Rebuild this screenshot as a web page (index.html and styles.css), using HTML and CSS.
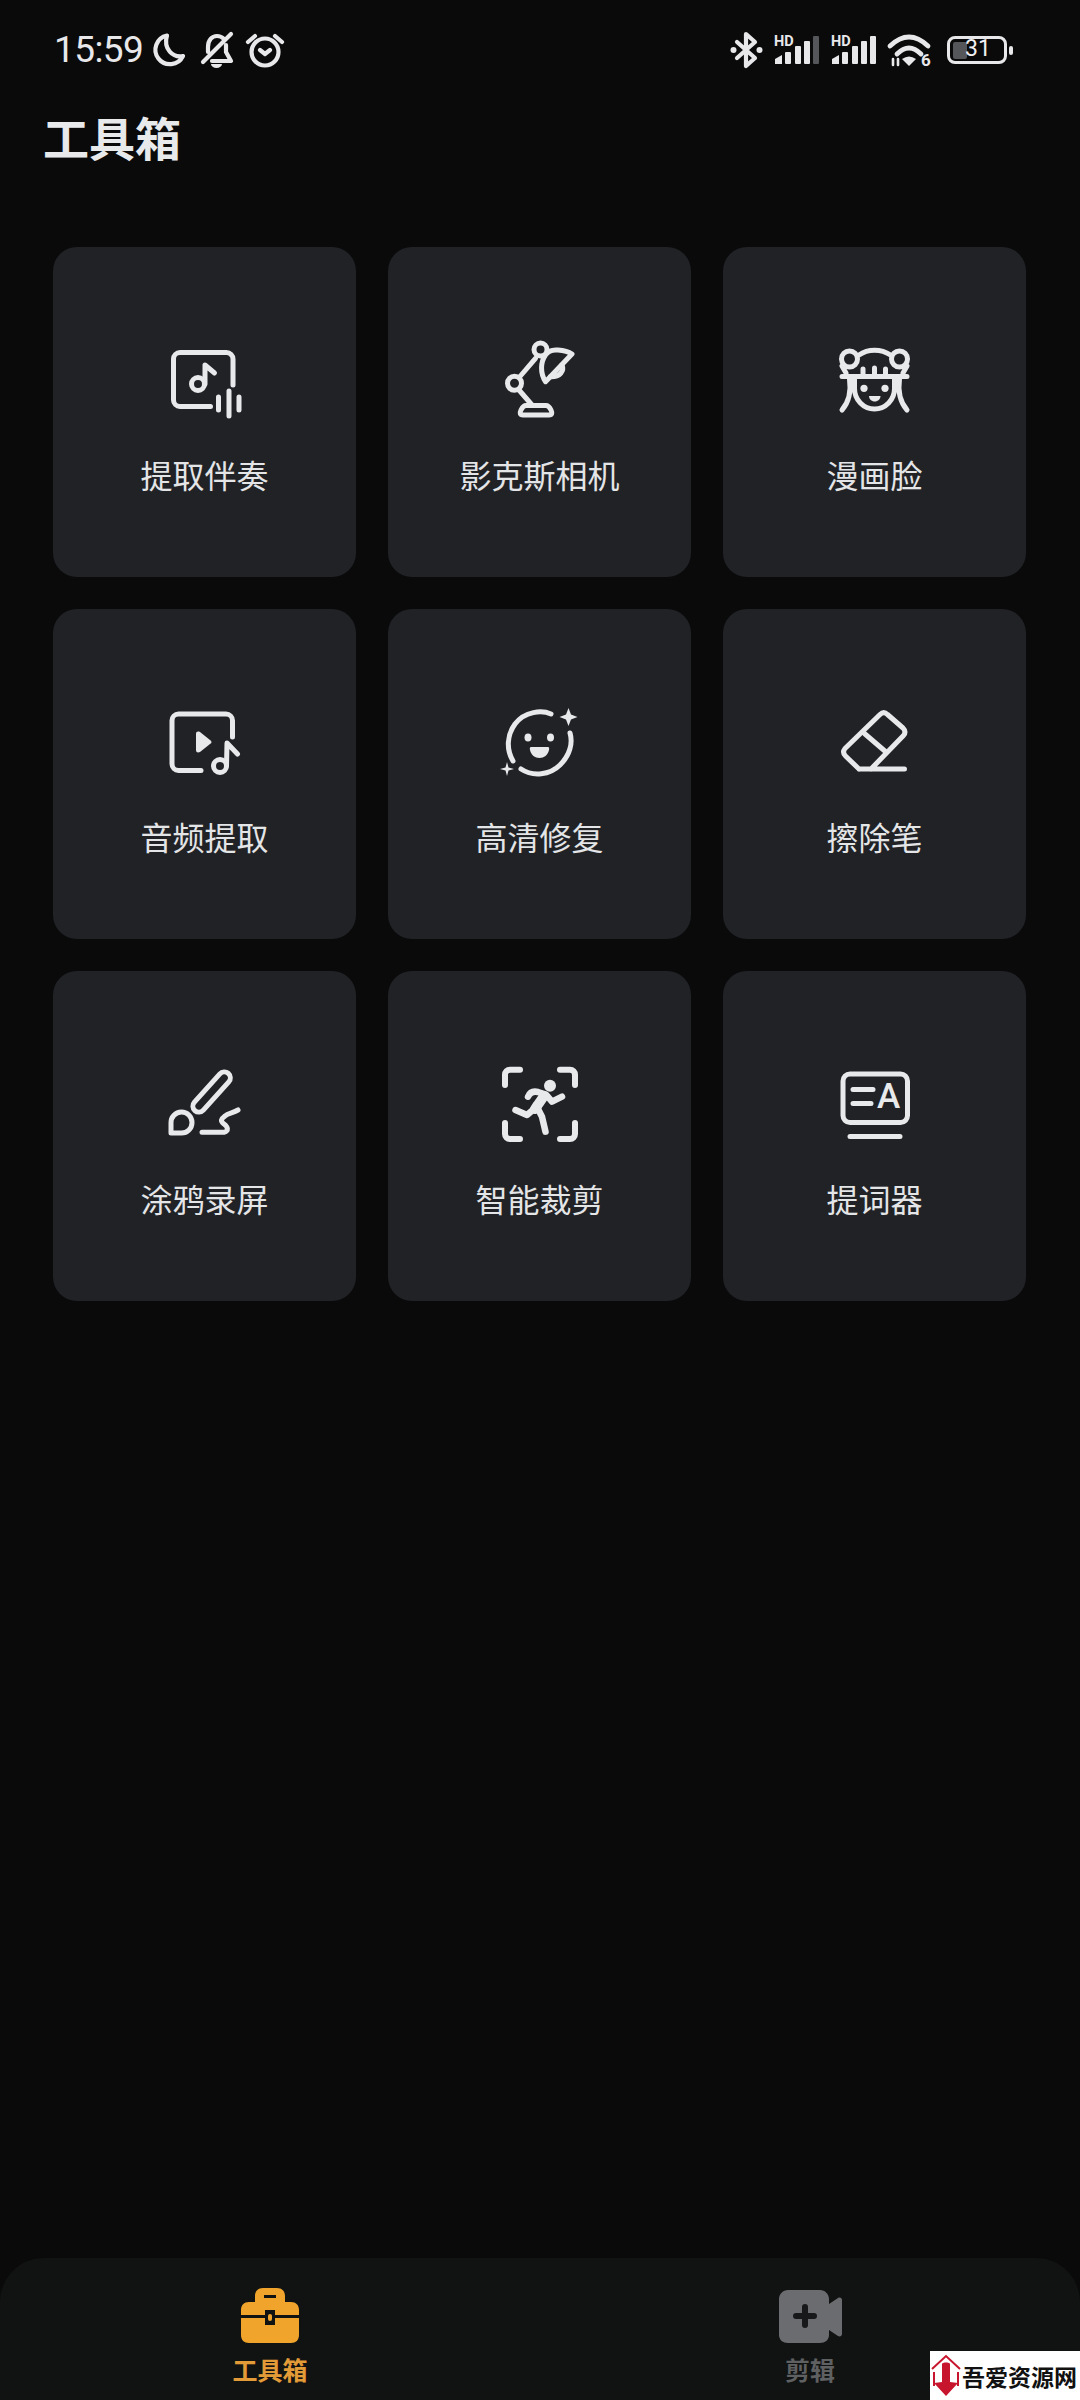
FILE: index.html
```html
<!DOCTYPE html>
<html lang="zh-CN">
<head>
<meta charset="utf-8">
<title>工具箱</title>
<link rel="stylesheet" href="styles.css">
</head>
<body>
<div class="page">
  <header class="status">
    <div class="status-left">
      <span class="time">15:59</span>
      <svg class="si moon" width="32" height="34" viewBox="0 0 32 34"><path d="M14 2.500A14.500 14.500 0 1 0 30 23C20 25 10 16 14 2.500Z"/></svg>
      <svg class="si bell" width="33" height="36" viewBox="0 0 33 36"><path d="M3 30 31 2M8 20V15C8 8 12 4 17 4c3 0 5 1 7 3M26 13V20l5 9H12"/><path class="solid" d="M11 32h11a5.500 4 0 0 1-11 0Z"/></svg>
      <svg class="si alarm" width="38" height="35" viewBox="0 0 38 35"><circle cx="19" cy="19" r="13.500"/><path d="M2 9 9 3M36 9 29 3M14 17l5 4 5-4"/></svg>
    </div>
    <div class="status-right">
      <svg class="si bt" width="33" height="36" viewBox="0 0 33 36"><path d="M7 10 25 26 16 34V2L25 10 7 26"/><circle class="solid" cx="3.500" cy="18" r="3"/><circle class="solid" cx="29.500" cy="18" r="3"/></svg>
      <svg class="sig" width="46" height="30" viewBox="0 0 46 30"><text class="hd" x="0" y="11">HD</text><path class="bar" d="M1 29V24L8 20V29Z"/><rect class="bar" x="11" y="17" width="6" height="12" rx="1"/><rect class="bar" x="21" y="11" width="6" height="18" rx="1"/><rect class="bar" x="30" y="6" width="6" height="23" rx="1"/><rect class="bar dim" x="39" y="1" width="6" height="28" rx="1"/></svg>
      <svg class="sig" width="46" height="30" viewBox="0 0 46 30"><text class="hd" x="0" y="11">HD</text><path class="bar" d="M1 29V24L8 20V29Z"/><rect class="bar" x="11" y="17" width="6" height="12" rx="1"/><rect class="bar" x="21" y="11" width="6" height="18" rx="1"/><rect class="bar" x="30" y="6" width="6" height="23" rx="1"/><rect class="bar" x="39" y="1" width="6" height="28" rx="1"/></svg>
      <svg class="si wifi" width="45" height="34" viewBox="0 0 45 34"><path d="M2 13Q21-5 40 13M9 21Q21 9 33 21"/><path class="solid" d="M14 26Q21 21 28 26L21 33Z"/><path class="thin" d="M5 26v6M10 26v6"/><text class="six" x="33" y="33">6</text></svg>
      <div class="battery">
        <div class="battery-body"><span class="battery-fill"></span><span class="battery-num">31</span></div>
        <span class="battery-tip"></span>
      </div>
    </div>
  </header>

  <h1 class="title">工具箱</h1>

  <main class="grid">
    <a class="card">
      <svg class="icon" width="80" height="80" viewBox="0 0 80 80"><path d="M68 40V14a6.500 6.500 0 0 0-6.500-6.500H15A6.500 6.500 0 0 0 8.500 14V55A6.500 6.500 0 0 0 15 61.500H45.500"/><circle cx="33" cy="39" r="6.500"/><path d="M40 39V20L49.500 28M53.500 52V65M64 46V71M74 52V65"/></svg>
      <span class="label">提取伴奏</span>
    </a>
    <a class="card">
      <svg class="icon" width="80" height="80" viewBox="0 0 80 80"><circle cx="40.500" cy="4.500" r="6.500"/><circle cx="14.500" cy="38.300" r="7"/><path d="M20 31.500 35.500 13.300M19 45 32 60M45.500 10C48 6 53 4.500 58 5 64 5.500 69 7 72 9L45.500 36.700C40 28 40.500 17 45.500 10Z"/><path d="M62 20C64.500 26 60 32 50.500 31.700"/><path d="M26 60.500H46C48.500 60.500 49.500 62 51 65 52.500 68 52 70 49 70H23C20 70 19.500 68 21 65 22.500 62 23.500 60.500 26 60.500Z"/></svg>
      <span class="label">影克斯相机</span>
    </a>
    <a class="card">
      <svg class="icon" width="80" height="80" viewBox="0 0 80 80"><circle cx="14.500" cy="14" r="8"/><circle cx="64.500" cy="14" r="8"/><path d="M24 10C33 3.500 46 3.500 55.500 10M7 21 11 28M72 21 68 28M7 31.500H72M28 24V29M39.500 23V29M50.500 24V29M14.500 34C16 45 14 57 7 65M64.500 34C63 45 65 57 72 65M19.500 33V43.500A20 20.500 0 0 0 59.500 43.500V33"/><circle class="solid" cx="29" cy="43.300" r="3.600"/><circle class="solid" cx="50" cy="43.300" r="3.600"/><path class="solid" d="M34 51H45.500C45.500 54 43 56.500 39.700 56.500S34 54 34 51Z"/></svg>
      <span class="label">漫画脸</span>
    </a>
    <a class="card">
      <svg class="icon" width="80" height="80" viewBox="0 0 80 80"><path d="M67.500 30V13.500A6.500 6.500 0 0 0 61 7H13.500A6.500 6.500 0 0 0 7 13.500V57A6.500 6.500 0 0 0 13.500 63.500H36"/><path class="solid" d="M31 27C31 24.500 33 24 35 25L45 33C47 34.500 47 36 45 37L35 45C33 46 31 45.500 31 43Z"/><circle cx="55" cy="59" r="6.500"/><path d="M61.500 59 62 36 72.500 47"/></svg>
      <span class="label">音频提取</span>
    </a>
    <a class="card">
      <svg class="icon" width="80" height="80" viewBox="0 0 80 80"><path d="M51 7C42 3 25 4 15 17 7 28 6 42 13 54M21 62C33 70 50 68 60 58 70 48 73 36 70 26"/><path class="solid" d="M68.500 1 71 7.500 77.500 10 71 12.500 68.500 19 66 12.500 59.500 10 66 7.500ZM7 55 8.500 60.500 14 62 8.500 63.500 7 69 5.500 63.500 0 62 5.500 60.500Z"/><ellipse class="solid" cx="28" cy="30.500" rx="3.500" ry="4"/><ellipse class="solid" cx="50.500" cy="30.500" rx="3.500" ry="4"/><path class="solid" d="M31 40H48C49 40 49.500 41 49 43 48 48 44 51 39.500 51S31 48 30 43C29.500 41 30 40 31 40Z"/></svg>
      <span class="label">高清修复</span>
    </a>
    <a class="card">
      <svg class="icon" width="80" height="80" viewBox="0 0 80 80"><path d="M24 62 10.500 49C8 46.500 8 44 10 41.500L45 7.500C47.500 5 50 5 52.500 7.500L68 21C70.500 23.500 70.500 26 68.500 28.500L36 62M24 62H69.500M30 27 51 45"/></svg>
      <span class="label">擦除笔</span>
    </a>
    <a class="card">
      <svg class="icon" width="80" height="80" viewBox="0 0 80 80"><rect x="40.600" y="-2" width="12" height="50" rx="6" transform="rotate(42 46.600 23)"/><path d="M6 64V53.700A10.500 10.500 0 1 1 16.500 64ZM73 41C68 44 63 44 60 47 56 50 55 52 59 55 63 58 64 62 59 63.300H37"/></svg>
      <span class="label">涂鸦录屏</span>
    </a>
    <a class="card">
      <svg class="icon" width="80" height="80" viewBox="0 0 80 80"><g class="corners"><path d="M20 .7H10A5 5 0 0 0 5 5.700V16M60 .7H70A5 5 0 0 1 75 5.700V16M5 54V65A5 5 0 0 0 10 70H20M75 54V65A5 5 0 0 1 70 70H60"/></g><circle class="solid" cx="50" cy="16.700" r="6"/><path class="fat" d="M28 27.700C30 23 34 22 38 23L46 25.500 52 32.700 62 27.700M15.500 41 27 46 34 40M36 36 42 47.700 45.500 62.700"/><path class="torso" d="M44 27 35 40"/></svg>
      <span class="label">智能裁剪</span>
    </a>
    <a class="card">
      <svg class="icon" width="80" height="80" viewBox="0 0 80 80"><rect x="8" y="5" width="64.500" height="48.500" rx="7"/><path d="M18 20.500H38M18 34.500H36M15 67.500H65"/><text class="ico-a" x="53.500" y="39">A</text></svg>
      <span class="label">提词器</span>
    </a>
  </main>

  <nav class="nav">
    <a class="nav-item">
      <svg class="nav-icon" width="58" height="56" viewBox="0 0 58 56"><path class="tool" d="M14 14V8C14 3 17 0 22 0H36C41 0 44 3 44 8V14H50C55 14 58 17 58 22V27H34V22H24V27H0V22C0 17 3 14 8 14ZM23 7V10H35V7Z"/><path class="tool" d="M0 30H24V37H34V30H58V47C58 52 55 55 50 55H8C3 55 0 52 0 47Z"/><rect class="tool" x="27" y="26" width="4" height="7" rx="2"/></svg>
      <span class="nav-label active">工具箱</span>
    </a>
    <a class="nav-item">
      <svg class="nav-icon" width="64" height="56" viewBox="0 0 64 56"><path class="cam" d="M10 2H42C47 2 51 6 51 11V16L60 10C62 9 64 10 64 12V46C64 48 62 49 60 48L51 42V47C51 52 47 55 42 55H10C5 55 1 52 1 47V11C1 6 5 2 10 2Z"/><path class="cam-plus" d="M27 19V37M18 28H36"/></svg>
      <span class="nav-label">剪辑</span>
    </a>
  </nav>

  <div class="mark">
    <svg class="mark-icon" width="30" height="43" viewBox="0 0 30 43"><path class="mark-line" d="M1 15 15 2 29 15M3 18V32M27 18V32"/><path class="mark-fill" d="M11 10C11 8 19 8 19 10V28L27 29 15 42 3 29 11 28Z"/></svg>
    <span class="mark-text">吾爱资源网</span>
  </div>
</div>
</body>
</html>
```

FILE: styles.css
```css
* { box-sizing: border-box; }
html, body { margin: 0; padding: 0; background: #0a0a0b; }
body { font-family: "Noto Sans CJK SC", "Noto Sans", sans-serif; }

.page {
  position: relative;
  width: 1080px;
  height: 2400px;
  display: flex;
  flex-direction: column;
  overflow: hidden;
  background: #0a0a0b;
  color: #e6e7e9;
}

/* status bar */
.status {
  display: flex;
  justify-content: space-between;
  align-items: center;
  height: 36px;
  margin-top: 32px;
  padding: 0 67px 0 54px;
}
.status-left, .status-right { display: flex; align-items: center; }
.status-left { gap: 13px; }
.status-right { gap: 11px; }
.time { font: 400 37px/36px Roboto, sans-serif; letter-spacing: -0.6px; color: #e8e8ea; margin-right: -3px; }
.si { fill: none; stroke: #e8e8ea; stroke-width: 4.2; stroke-linecap: round; stroke-linejoin: round; overflow: visible; }
.si .solid { fill: #e8e8ea; stroke: none; }
.si .thin { stroke-width: 2.6; }
.wifi { stroke-width: 4.8; }
.bell { margin-left: 2px; }
.sig { overflow: visible; }
.hd { font: 700 14.5px Roboto, sans-serif; fill: #e8e8ea; }
.bar { fill: #e8e8ea; }
.bar.dim { fill: #55565a; }
.six { font: 700 17px Roboto, sans-serif; fill: #e8e8ea; stroke: none; }
.battery { display: flex; align-items: center; gap: 2px; margin-left: 3px; }
.battery-body {
  position: relative;
  width: 60px;
  height: 28px;
  border: 3.5px solid #e8e8ea;
  border-radius: 8px;
}
.battery-fill { position: absolute; left: 3px; top: 2.5px; bottom: 2.5px; width: 14px; background: #55565a; border-radius: 2px; }
.battery-num {
  position: absolute;
  left: 15px;
  top: -1px;
  font: 400 23px/22px Roboto, sans-serif;
  color: #f0f0f2;
}
.battery-tip { width: 4px; height: 9px; background: #e8e8ea; border-radius: 2px; }

/* title */
.title {
  margin: 35px 0 0 43px;
  font-size: 46px;
  line-height: 66px;
  font-weight: 700;
  color: #e8e9eb;
}

/* grid */
.grid {
  display: grid;
  grid-template-columns: repeat(3, 303px);
  grid-auto-rows: 330px;
  gap: 32px;
  padding: 0 53px;
  margin-top: 78px;
}
.card {
  display: flex;
  flex-direction: column;
  align-items: center;
  padding-top: 98px;
  background: #202226;
  border-radius: 24px;
}
.icon { flex: none; overflow: visible; fill: none; stroke: #e8e9eb; stroke-width: 5; stroke-linecap: round; stroke-linejoin: round; }
.icon .solid { fill: #e8e9eb; stroke: none; }
.icon .fat { stroke-width: 6.5; }
.icon .torso { stroke-width: 10; }
.icon .corners { stroke-width: 6; }
.ico-a { font: 500 35px Roboto, sans-serif; fill: #e8e9eb; stroke: none; text-anchor: middle; }
.label {
  margin-top: 27px;
  font-size: 32px;
  line-height: 44px;
  font-weight: 400;
  color: #e4e5e7;
  white-space: nowrap;
}

/* bottom nav */
.nav {
  margin-top: auto;
  height: 142px;
  display: grid;
  grid-template-columns: 1fr 1fr;
  background: #111312;
  border-radius: 44px 44px 0 0;
}
.nav-item { display: flex; flex-direction: column; align-items: center; padding-top: 30px; }
.nav-icon { flex: none; }
.tool { fill: #f0a42c; }
.cam { fill: #6b6c6f; }
.cam-plus { fill: none; stroke: #17181a; stroke-width: 6; stroke-linecap: round; }
.nav-label {
  margin-top: 8px;
  font-size: 25px;
  line-height: 34px;
  font-weight: 700;
  color: #5f6062;
}
.nav-label.active { color: #e39b38; }

/* watermark */
.mark {
  position: absolute;
  right: 0;
  bottom: 0;
  width: 150px;
  height: 49px;
  display: flex;
  align-items: center;
  gap: 1px;
  padding-left: 1px;
  background: #fff;
}
.mark-icon { flex: none; }
.mark-line { fill: none; stroke: #c8152e; stroke-width: 2; }
.mark-fill { fill: #c8152e; }
.mark-text { font-size: 23px; line-height: 30px; font-weight: 700; color: #111; white-space: nowrap; letter-spacing: 0; }
```
